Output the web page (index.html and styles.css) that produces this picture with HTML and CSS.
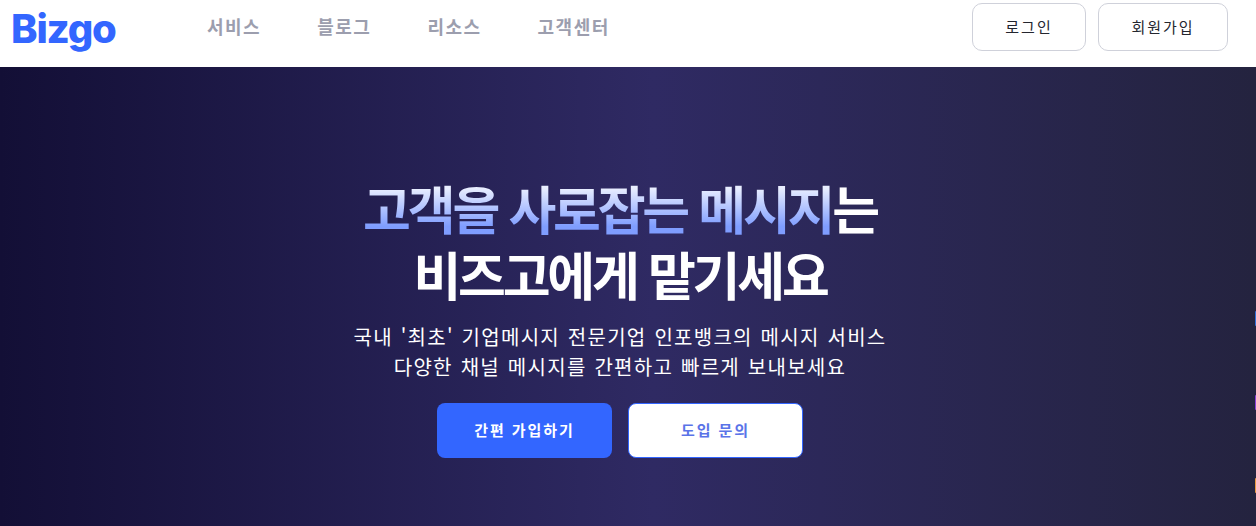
FILE: index.html
```html
<!DOCTYPE html>
<html lang="ko">
<head>
<meta charset="utf-8">
<title>Bizgo</title>
<link rel="stylesheet" href="styles.css">
</head>
<body>
<header class="header">
  <a class="logo" href="#">Bizgo</a>
  <nav class="nav">
    <a href="#">서비스</a>
    <a href="#">블로그</a>
    <a href="#">리소스</a>
    <a href="#">고객센터</a>
  </nav>
  <div class="auth">
    <a class="auth-btn login" href="#">로그인</a>
    <a class="auth-btn signup" href="#">회원가입</a>
  </div>
</header>
<main class="hero">
  <h1 class="title"><span class="grad">고객을 사로잡는 메시지</span>는<br>비즈고에게 맡기세요</h1>
  <p class="sub">국내 '최초' 기업메시지 전문기업 인포뱅크의 메시지 서비스<br>다양한 채널 메시지를 간편하고 빠르게 보내보세요</p>
  <div class="cta">
    <a class="btn primary" href="#">간편 가입하기</a>
    <a class="btn ghost" href="#">도입 문의</a>
  </div>
  <i class="sliver s1"></i>
  <i class="sliver s2"></i>
  <i class="sliver s3"></i>
</main>
</body>
</html>
```
FILE: styles.css
```css
* { box-sizing: border-box; }
html, body { margin: 0; height: 100%; overflow: hidden; }
body { font-family: "Noto Sans CJK KR", "Noto Sans", sans-serif; background: #fff; }
a { text-decoration: none; color: inherit; }
.header { height: 67px; display: flex; align-items: flex-start; padding: 3px 28px 0 12px; background: #fff; }
.logo { width: 195px; margin-top: 1px; margin-left: -1px; margin-right: 1px; font-family: "Inter", sans-serif; font-weight: 800; font-size: 40px; line-height: 50px; letter-spacing: -1.2px; color: #3366ff; }
.nav { display: flex; gap: 56px; margin-top: 10px; font-size: 18px; line-height: 26px; font-weight: 700; letter-spacing: 1.5px; color: #9c9eae; }
.auth { margin-left: auto; display: flex; gap: 12px; }
.auth-btn { height: 48px; padding-bottom: 2px; display: flex; align-items: center; justify-content: center; border: 1px solid #cfd1da; border-radius: 10px; font-size: 15px; letter-spacing: 2px; color: #24262f; }
.login { width: 114px; }
.signup { width: 130px; }
.hero { position: relative; height: 459px; display: flex; flex-direction: column; align-items: center; padding: 108px 16px 0 0; color: #fff; background: linear-gradient(90deg, #130f36 0%, #2f2a63 52%, #24233f 100%); }
.title { margin: 0; font-size: 52px; line-height: 66px; font-weight: 700; letter-spacing: -3.2px; text-align: center; }
.grad { display: inline-block; background: linear-gradient(180deg, #e9eeff 20%, #7f9dff 78%); -webkit-background-clip: text; background-clip: text; color: transparent; }
.sub { margin: 15px 0 0; font-size: 20px; line-height: 30px; letter-spacing: 1.27px; word-spacing: 1px; text-align: center; }
.cta { display: flex; gap: 16px; margin-top: 21px; }
.btn { width: 175px; height: 55px; padding-bottom: 2px; display: flex; align-items: center; justify-content: center; border-radius: 8px; font-size: 15px; font-weight: 700; letter-spacing: 1.9px; }
.primary { background: #3366ff; color: #fff; }
.ghost { background: #fff; border: 1px solid #3366ff; color: #5a73e8; }
.sliver { position: absolute; right: 0; width: 1px; height: 15px; border-radius: 1px 0 0 1px; }
.s1 { top: 244px; background: #2f6fd8; }
.s2 { top: 328px; background: #8a3fd6; }
.s3 { top: 411px; background: #e8983f; }
```
